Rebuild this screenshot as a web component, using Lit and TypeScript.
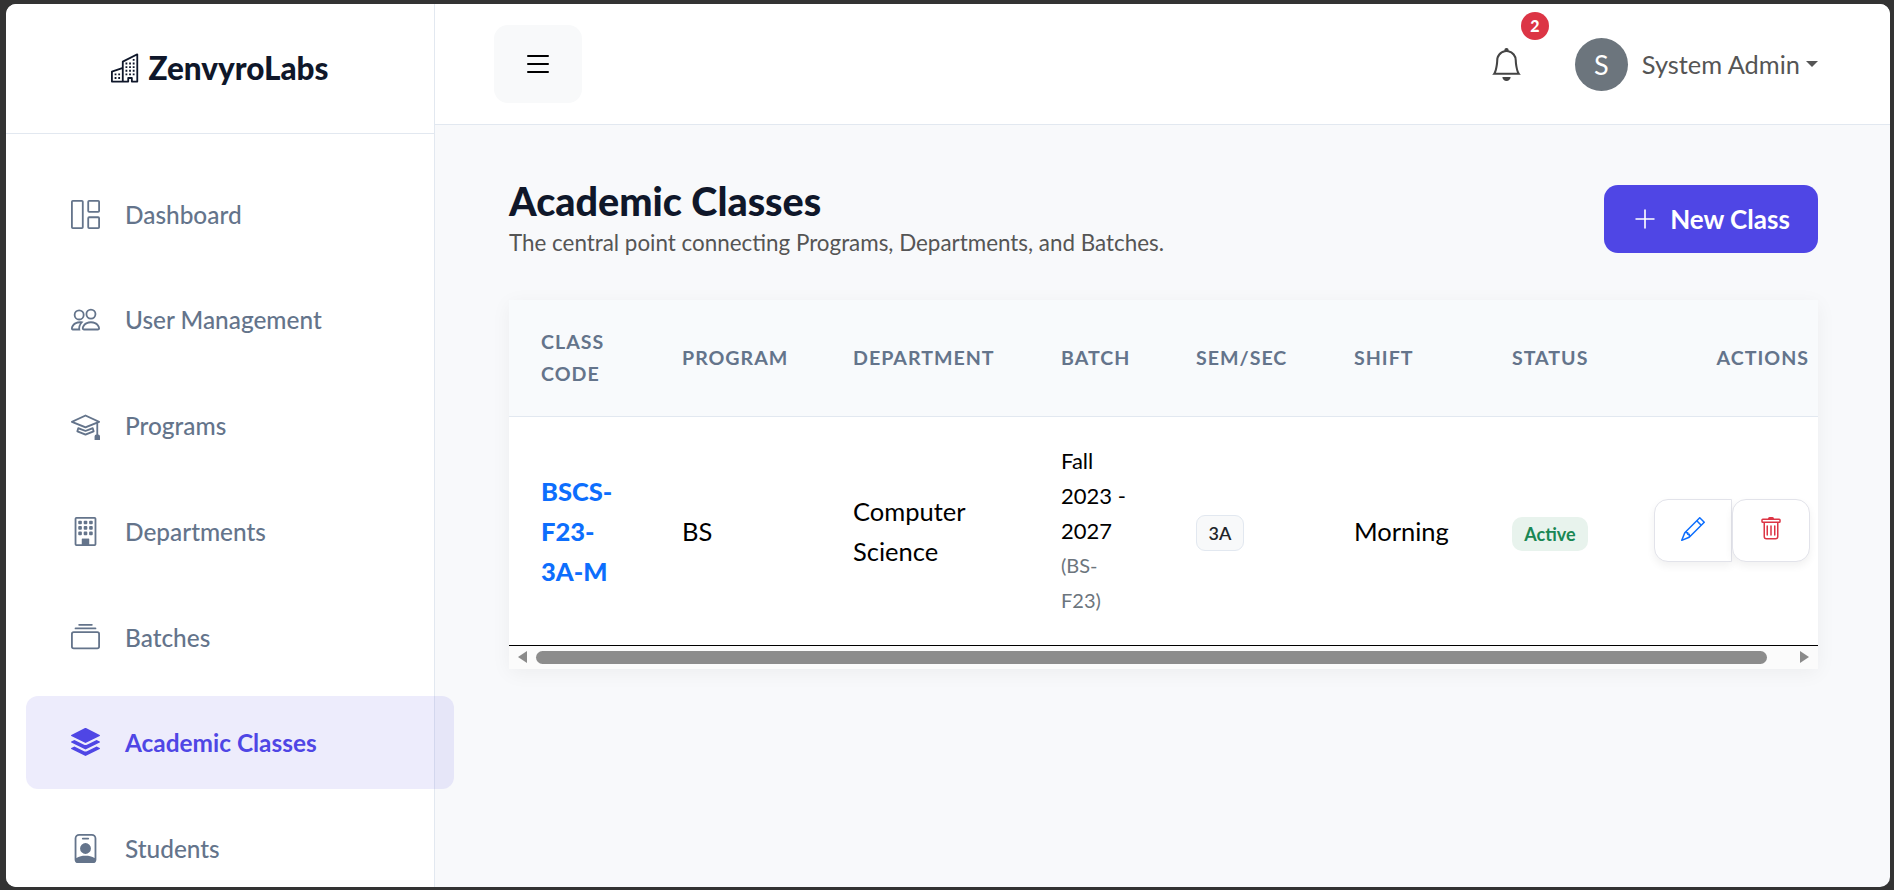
import { LitElement, html, css, svg } from 'lit';
import { customElement } from 'lit/decorators.js';

// bootstrap-icons style paths, all on a 16 box
const ICONS: Record<string, unknown> = {
  dashboard: svg`<path d="M6 1H1v14h5V1zm9 0h-5v5h5V1zm0 9v5h-5v-5h5zM0 1a1 1 0 0 1 1-1h5a1 1 0 0 1 1 1v14a1 1 0 0 1-1 1H1a1 1 0 0 1-1-1V1zm9 0a1 1 0 0 1 1-1h5a1 1 0 0 1 1 1v5a1 1 0 0 1-1 1h-5a1 1 0 0 1-1-1V1zm1 8a1 1 0 0 0-1 1v5a1 1 0 0 0 1 1h5a1 1 0 0 0 1-1v-5a1 1 0 0 0-1-1h-5z"/>`,
  people: svg`<path d="M15 14s1 0 1-1-1-4-5-4-5 3-5 4 1 1 1 1h8zm-7.978-1A.261.261 0 0 1 7 12.996c.001-.264.167-1.03.76-1.72C8.312 10.629 9.282 10 11 10c1.717 0 2.687.63 3.24 1.276.593.69.758 1.457.76 1.72l-.008.002a.274.274 0 0 1-.014.002H7.022zM11 7a2 2 0 1 0 0-4 2 2 0 0 0 0 4zm3-2a3 3 0 1 1-6 0 3 3 0 0 1 6 0zM6.936 9.28a5.88 5.88 0 0 0-1.23-.247A7.35 7.35 0 0 0 5 9c-4 0-5 3-5 4 0 .667.333 1 1 1h4.216A2.238 2.238 0 0 1 5 13c0-1.01.377-2.042 1.09-2.904.243-.294.526-.569.846-.816zM4.92 10A5.493 5.493 0 0 0 4 13H1c0-.26.164-1.03.76-1.724.545-.636 1.492-1.256 3.16-1.275zM1.5 5.5a3 3 0 1 1 6 0 3 3 0 0 1-6 0zm3-2a2 2 0 1 0 0 4 2 2 0 0 0 0-4z"/>`,
  programs: svg`<path d="M8.211 2.047a.5.5 0 0 0-.422 0l-7.5 3.5a.5.5 0 0 0 .025.917l7.5 3a.5.5 0 0 0 .372 0L14 7.14V13a1 1 0 0 0-1 1v2h3v-2a1 1 0 0 0-1-1V6.739l.686-.275a.5.5 0 0 0 .025-.917l-7.5-3.5ZM8 8.46 1.758 5.965 8 3.052l6.242 2.913L8 8.46Z"/><path d="M4.176 9.032a.5.5 0 0 0-.656.327l-.5 1.7a.5.5 0 0 0 .294.605l4.5 1.8a.5.5 0 0 0 .372 0l4.5-1.8a.5.5 0 0 0 .294-.605l-.5-1.7a.5.5 0 0 0-.656-.327L8 10.466 4.176 9.032Zm-.068 1.873.22-.748 3.496 1.311a.5.5 0 0 0 .352 0l3.496-1.311.22.748L8 12.46l-3.892-1.556Z"/>`,
  building: svg`<path fill-rule="evenodd" d="M2 1a1 1 0 0 1 1-1h10a1 1 0 0 1 1 1v14a1 1 0 0 1-1 1H3a1 1 0 0 1-1-1V1Zm11 0H3v14h3v-3h4v3h3V1Z"/><path d="M6 12h4v4H6z"/><path d="M4 2.5a.5.5 0 0 1 .5-.5h1a.5.5 0 0 1 .5.5v1a.5.5 0 0 1-.5.5h-1a.5.5 0 0 1-.5-.5v-1Zm3 0a.5.5 0 0 1 .5-.5h1a.5.5 0 0 1 .5.5v1a.5.5 0 0 1-.5.5h-1a.5.5 0 0 1-.5-.5v-1Zm3 0a.5.5 0 0 1 .5-.5h1a.5.5 0 0 1 .5.5v1a.5.5 0 0 1-.5.5h-1a.5.5 0 0 1-.5-.5v-1Zm-6 3a.5.5 0 0 1 .5-.5h1a.5.5 0 0 1 .5.5v1a.5.5 0 0 1-.5.5h-1a.5.5 0 0 1-.5-.5v-1Zm3 0a.5.5 0 0 1 .5-.5h1a.5.5 0 0 1 .5.5v1a.5.5 0 0 1-.5.5h-1a.5.5 0 0 1-.5-.5v-1Zm3 0a.5.5 0 0 1 .5-.5h1a.5.5 0 0 1 .5.5v1a.5.5 0 0 1-.5.5h-1a.5.5 0 0 1-.5-.5v-1Zm-6 3a.5.5 0 0 1 .5-.5h1a.5.5 0 0 1 .5.5v1a.5.5 0 0 1-.5.5h-1a.5.5 0 0 1-.5-.5v-1Zm3 0a.5.5 0 0 1 .5-.5h1a.5.5 0 0 1 .5.5v1a.5.5 0 0 1-.5.5h-1a.5.5 0 0 1-.5-.5v-1Zm3 0a.5.5 0 0 1 .5-.5h1a.5.5 0 0 1 .5.5v1a.5.5 0 0 1-.5.5h-1a.5.5 0 0 1-.5-.5v-1Z"/>`,
  batches: svg`<path d="M2.5 3.5a.5.5 0 0 1 0-1h11a.5.5 0 0 1 0 1h-11zm2-2a.5.5 0 0 1 0-1h7a.5.5 0 0 1 0 1h-7zM0 13a1.5 1.5 0 0 0 1.5 1.5h13A1.5 1.5 0 0 0 16 13V6a1.5 1.5 0 0 0-1.5-1.5h-13A1.5 1.5 0 0 0 0 6v7zm1.5.5A.5.5 0 0 1 1 13V6a.5.5 0 0 1 .5-.5h13a.5.5 0 0 1 .5.5v7a.5.5 0 0 1-.5.5h-13z"/>`,
  stack: svg`<path d="m14.12 10.163 1.715.858c.22.11.22.424 0 .534L8.267 15.34a.598.598 0 0 1-.534 0L.165 11.555a.299.299 0 0 1 0-.534l1.716-.858 5.317 2.659c.505.252 1.1.252 1.604 0l5.317-2.66z"/><path d="m14.12 6.576 1.715.858c.22.11.22.424 0 .534l-7.568 3.784a.598.598 0 0 1-.534 0L.165 7.968a.299.299 0 0 1 0-.534l1.716-.858 5.317 2.659c.505.252 1.1.252 1.604 0l5.317-2.659z"/><path d="M7.733.063a.598.598 0 0 1 .534 0l7.568 3.784a.3.3 0 0 1 0 .535L8.267 8.165a.598.598 0 0 1-.534 0L.165 4.382a.299.299 0 0 1 0-.535L7.733.063z"/>`,
  badge: svg`<path d="M6.5 2a.5.5 0 0 0 0 1h3a.5.5 0 0 0 0-1h-3zM11 8a3 3 0 1 1-6 0 3 3 0 0 1 6 0z"/><path d="M4.5 0A2.5 2.5 0 0 0 2 2.5V14a2 2 0 0 0 2 2h8a2 2 0 0 0 2-2V2.5A2.5 2.5 0 0 0 11.5 0h-7zM3 2.5A1.5 1.5 0 0 1 4.5 1h7A1.5 1.5 0 0 1 13 2.5v10.795a4.2 4.2 0 0 0-.776-.492C11.392 12.387 10.063 12 8 12s-3.392.387-4.224.803a4.2 4.2 0 0 0-.776.492V2.5z"/>`,
  buildings: svg`<path d="M14.763.075A.5.5 0 0 1 15 .5v15a.5.5 0 0 1-.5.5h-3a.5.5 0 0 1-.5-.5V14h-1v1.5a.5.5 0 0 1-.5.5h-9a.5.5 0 0 1-.5-.5V10a.5.5 0 0 1 .342-.474L6 7.64V4.5a.5.5 0 0 1 .276-.447l8-4a.5.5 0 0 1 .487.022ZM6 8.694 1 10.36V15h5V8.694ZM7 15h2v-1.5a.5.5 0 0 1 .5-.5h2a.5.5 0 0 1 .5.5V15h2V1.309l-7 3.5V15Z"/><path d="M2 11h1v1H2v-1Zm2 0h1v1H4v-1Zm-2 2h1v1H2v-1Zm2 0h1v1H4v-1Zm4-4h1v1H8V9Zm2 0h1v1h-1V9Zm-2 2h1v1H8v-1Zm2 0h1v1h-1v-1Zm2-2h1v1h-1V9Zm0 2h1v1h-1v-1ZM8 7h1v1H8V7Zm2 0h1v1h-1V7Zm2 0h1v1h-1V7ZM8 5h1v1H8V5Zm2 0h1v1h-1V5Zm2 0h1v1h-1V5Zm0-2h1v1h-1V3Z"/>`,
  list: svg`<path fill-rule="evenodd" d="M2.5 12a.5.5 0 0 1 .5-.5h10a.5.5 0 0 1 0 1H3a.5.5 0 0 1-.5-.5zm0-4a.5.5 0 0 1 .5-.5h10a.5.5 0 0 1 0 1H3a.5.5 0 0 1-.5-.5zm0-4a.5.5 0 0 1 .5-.5h10a.5.5 0 0 1 0 1H3a.5.5 0 0 1-.5-.5z"/>`,
  bell: svg`<path d="M8 16a2 2 0 0 0 2-2H6a2 2 0 0 0 2 2zM8 1.918l-.797.161A4.002 4.002 0 0 0 4 6c0 .628-.134 2.197-.459 3.742-.16.767-.376 1.566-.663 2.258h10.244c-.287-.692-.502-1.49-.663-2.258C12.134 8.197 12 6.628 12 6a4.002 4.002 0 0 0-3.203-3.92L8 1.917zM14.22 12c.223.447.481.801.78 1H1c.299-.199.557-.553.78-1C2.68 10.2 3 6.88 3 6c0-2.42 1.72-4.44 4.005-4.901a1 1 0 1 1 1.99 0A5.002 5.002 0 0 1 13 6c0 .88.32 4.2 1.22 6z"/>`,
  plus: svg`<path fill-rule="evenodd" d="M8 2a.5.5 0 0 1 .5.5v5h5a.5.5 0 0 1 0 1h-5v5a.5.5 0 0 1-1 0v-5h-5a.5.5 0 0 1 0-1h5v-5A.5.5 0 0 1 8 2Z"/>`,
  pencil: svg`<path d="M12.146.146a.5.5 0 0 1 .708 0l3 3a.5.5 0 0 1 0 .708l-10 10a.5.5 0 0 1-.168.11l-5 2a.5.5 0 0 1-.65-.65l2-5a.5.5 0 0 1 .11-.168l10-10zM11.207 2.5 13.5 4.793 14.793 3.5 12.5 1.207 11.207 2.5zm1.586 3L10.5 3.207 4 9.707V10h.5a.5.5 0 0 1 .5.5v.5h.5a.5.5 0 0 1 .5.5v.5h.293l6.5-6.5zm-9.761 5.175-.106.106-1.528 3.821 3.821-1.528.106-.106A.5.5 0 0 1 5 12.5V12h-.5a.5.5 0 0 1-.5-.5V11h-.5a.5.5 0 0 1-.468-.325z"/>`,
  trash: svg`<path d="M5.5 5.5A.5.5 0 0 1 6 6v6a.5.5 0 0 1-1 0V6a.5.5 0 0 1 .5-.5zm2.5 0a.5.5 0 0 1 .5.5v6a.5.5 0 0 1-1 0V6a.5.5 0 0 1 .5-.5zm3 .5a.5.5 0 0 0-1 0v6a.5.5 0 0 0 1 0V6z"/><path fill-rule="evenodd" d="M14.5 3a1 1 0 0 1-1 1H13v9a2 2 0 0 1-2 2H5a2 2 0 0 1-2-2V4h-.5a1 1 0 0 1-1-1V2a1 1 0 0 1 1-1H6a1 1 0 0 1 1-1h2a1 1 0 0 1 1 1h3.5a1 1 0 0 1 1 1v1zM4.118 4 4 4.059V13a1 1 0 0 0 1 1h6a1 1 0 0 0 1-1V4.059L11.882 4H4.118zM2.5 3V2h11v1h-11z"/>`,
};

const icon = (name: string) => html`<svg class="bi" viewBox="0 0 16 16" fill="currentColor">${ICONS[name]}</svg>`;

const NAV = [
  { label: 'Dashboard', icon: 'dashboard' },
  { label: 'User Management', icon: 'people' },
  { label: 'Programs', icon: 'programs' },
  { label: 'Departments', icon: 'building' },
  { label: 'Batches', icon: 'batches' },
  { label: 'Academic Classes', icon: 'stack', active: true },
  { label: 'Students', icon: 'badge' },
];

@customElement('app-root')
export class AppRoot extends LitElement {
  static styles = css`
    :host {
      display: block;
      height: 100vh;
      box-sizing: border-box;
      padding: 4px 4px 3px 6px;
      background: #333;
      overflow: hidden;
      font-family: 'Lato', sans-serif;
    }
    .bi { display: block; width: 100%; height: 100%; }

    .shell {
      display: flex;
      height: 100%;
      background: #f8f9fb;
      border-radius: 10px;
      overflow: hidden;
    }

    /* sidebar */
    .sidebar {
      flex: 0 0 429px;
      min-width: 0;
      box-sizing: border-box;
      background: #fff;
      border-right: 1px solid #e2e8f0;
      position: relative;
      z-index: 1;
    }
    .brand {
      height: 130px;
      box-sizing: border-box;
      border-bottom: 1px solid #e2e8f0;
      display: flex;
      align-items: center;
      justify-content: center;
      gap: 8px;
      color: #0f172a;
      font-size: 31.5px;
      font-weight: 900;
      padding-bottom: 1px;
    }
    .brand-icon { width: 29px; height: 30px; }
    .nav {
      display: flex;
      flex-direction: column;
      gap: 12.8px;
      padding: 33.5px 0 0 20px;
      width: 428px;
    }
    .nav-item {
      height: 93px;
      display: flex;
      align-items: center;
      gap: 25px;
      padding-left: 45px;
      border-radius: 12px;
      color: #64748b;
      font-size: 24.4px;
      font-weight: 500;
    }
    .nav-item.active {
      background: rgba(79, 70, 229, 0.1);
      color: #4f46e5;
      font-weight: 700;
    }
    .nav-icon { width: 29px; height: 29px; flex: none; }

    /* main */
    .main { flex: 1; min-width: 0; display: flex; flex-direction: column; }
    .topbar {
      height: 121px;
      flex: none;
      box-sizing: border-box;
      background: #fff;
      border-bottom: 1px solid #e2e8f0;
      display: flex;
      align-items: center;
      padding: 0 72px 0 59px;
    }
    .menu-btn {
      width: 88px;
      height: 78px;
      background: #f8f9fa;
      border-radius: 14px;
      color: #000;
      display: grid;
      place-items: center;
      margin-bottom: 1px;
    }
    .menu-btn span { width: 32px; height: 32px; }
    .spacer { flex: 1; }
    .bell { width: 33px; height: 33px; color: #444; position: relative; margin-right: 52px; }
    .bell-count {
      position: absolute;
      left: 31px;
      top: -36px;
      width: 28px;
      height: 28px;
      border-radius: 50%;
      background: #dc3545;
      color: #fff;
      font-size: 16px;
      font-weight: 900;
      display: grid;
      place-items: center;
    }
    .avatar {
      width: 53px;
      height: 53px;
      border-radius: 50%;
      background: #6c757d;
      color: #fff;
      font-size: 27px;
      display: grid;
      place-items: center;
      margin-right: 14px;
    }
    .user { color: #555; font-size: 25.4px; }
    .caret {
      width: 0;
      height: 0;
      border: 6.5px solid transparent;
      border-top-color: #555;
      border-bottom: 0;
      margin-left: 6px;
    }

    .content { padding: 54px 72px 0 74px; }
    .page-head { display: flex; justify-content: space-between; align-items: flex-start; }
    h1 {
      margin: 0 0 6px;
      font-size: 39.5px;
      line-height: 44px;
      font-weight: 900;
      color: #0f172a;
    }
    .subtitle { font-size: 22.4px; line-height: 28px; color: #555; }
    .new-btn {
      width: 214px;
      height: 68px;
      box-sizing: border-box;
      margin-top: 6px;
      border-radius: 14px;
      background: #4f46e5;
      color: #fff;
      font-size: 26px;
      font-weight: 700;
      display: flex;
      align-items: center;
      justify-content: center;
      gap: 12px;
    }
    .new-btn span { width: 26px; height: 26px; }

    .card {
      margin-top: 43px;
      background: #fff;
      box-shadow: 0 4px 20px rgba(0, 0, 0, 0.05);
      border-radius: 0 0 4px 4px;
    }
    table { width: 100%; border-collapse: collapse; table-layout: fixed; }
    col.c1 { width: 141px; }
    col.c2 { width: 171px; }
    col.c3 { width: 208px; }
    col.c4 { width: 135px; }
    col.c5 { width: 158px; }
    col.c6 { width: 158px; }
    th {
      height: 116px;
      box-sizing: border-box;
      background: #f8fafc;
      border-bottom: 1px solid #e2e8f0;
      text-align: left;
      padding: 0 0 0 32px;
      color: #64748b;
      font-size: 19.6px;
      line-height: 32px;
      font-weight: 700;
      letter-spacing: 1px;
    }
    th.right { text-align: right; padding-right: 9px; }
    td {
      height: 229px;
      box-sizing: border-box;
      padding: 0 0 0 32px;
      border-bottom: 1px solid #000;
      color: #000;
      font-size: 25.5px;
      line-height: 40px;
    }
    .code { color: #0d6efd; font-weight: 900; }
    .batch { font-size: 22px; line-height: 35px; }
    .batch small { display: block; font-size: 20px; color: #6c757d; }
    .sem {
      display: inline-block;
      box-sizing: border-box;
      width: 48px;
      height: 36px;
      line-height: 34px;
      text-align: center;
      border: 1px solid #e2e8f0;
      background: #f8f9fa;
      border-radius: 9px;
      font-size: 18px;
      font-weight: 600;
      color: #212529;
    }
    .status {
      display: inline-block;
      width: 76px;
      height: 34px;
      line-height: 34px;
      text-align: center;
      background: #e8f3ed;
      color: #198754;
      border-radius: 10px;
      font-size: 18px;
      font-weight: 700;
    }
    .actions { display: flex; justify-content: flex-end; padding-right: 8px; }
    .act {
      flex: none;
      width: 78px;
      height: 63px;
      box-sizing: border-box;
      border: 1px solid #e2e3ea;
      background: #fff;
      display: grid;
      place-items: center;
      box-shadow: 0 4px 8px rgba(0, 0, 0, 0.06);
    }
    .act.edit { border-radius: 14px 0 0 14px; color: #0d6efd; }
    .act.del { border-radius: 14px; color: #dc3545; }
    .act span { width: 24px; height: 24px; margin-bottom: 3px; }

    .hscroll {
      height: 23px;
      background: #fbfbfb;
      display: flex;
      align-items: center;
      position: relative;
    }
    .arrow { width: 0; height: 0; border: 6px solid transparent; position: absolute; top: 5.5px; }
    .arrow.l { left: 9px; border-right: 9px solid #8a8a8a; border-left: 0; }
    .arrow.r { right: 9px; border-left: 9px solid #8a8a8a; border-right: 0; }
    .thumb { height: 13px; margin: 0 51px 0 27px; flex: 1; background: #8c8c8c; border-radius: 7px; }
  `;

  render() {
    return html`
      <div class="shell">
        <aside class="sidebar">
          <div class="brand"><span class="brand-icon">${icon('buildings')}</span>ZenvyroLabs</div>
          <nav class="nav">
            ${NAV.map(
              (n) => html`<div class="nav-item ${n.active ? 'active' : ''}">
                <span class="nav-icon">${icon(n.icon)}</span>${n.label}
              </div>`
            )}
          </nav>
        </aside>
        <div class="main">
          <header class="topbar">
            <div class="menu-btn"><span>${icon('list')}</span></div>
            <div class="spacer"></div>
            <div class="bell">${icon('bell')}<span class="bell-count">2</span></div>
            <div class="avatar">S</div>
            <div class="user">System Admin</div>
            <div class="caret"></div>
          </header>
          <div class="content">
            <div class="page-head">
              <div>
                <h1>Academic Classes</h1>
                <div class="subtitle">The central point connecting Programs, Departments, and Batches.</div>
              </div>
              <div class="new-btn"><span>${icon('plus')}</span>New Class</div>
            </div>
            <div class="card">
              <table>
                <colgroup>
                  <col class="c1" /><col class="c2" /><col class="c3" /><col class="c4" /><col class="c5" /><col class="c6" /><col class="c6" /><col />
                </colgroup>
                <thead>
                  <tr>
                    <th>CLASS<br />CODE</th>
                    <th>PROGRAM</th>
                    <th>DEPARTMENT</th>
                    <th>BATCH</th>
                    <th>SEM/SEC</th>
                    <th>SHIFT</th>
                    <th>STATUS</th>
                    <th class="right">ACTIONS</th>
                  </tr>
                </thead>
                <tbody>
                  <tr>
                    <td class="code">BSCS-<br />F23-<br />3A-M</td>
                    <td>BS</td>
                    <td>Computer<br />Science</td>
                    <td class="batch">Fall<br />2023 -<br />2027<small>(BS-<br />F23)</small></td>
                    <td><span class="sem">3A</span></td>
                    <td>Morning</td>
                    <td><span class="status">Active</span></td>
                    <td>
                      <div class="actions">
                        <div class="act edit"><span>${icon('pencil')}</span></div>
                        <div class="act del"><span>${icon('trash')}</span></div>
                      </div>
                    </td>
                  </tr>
                </tbody>
              </table>
              <div class="hscroll">
                <span class="arrow l"></span>
                <div class="thumb"></div>
                <span class="arrow r"></span>
              </div>
            </div>
          </div>
        </div>
      </div>
    `;
  }
}
